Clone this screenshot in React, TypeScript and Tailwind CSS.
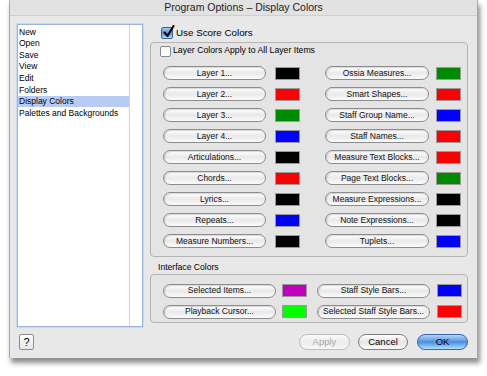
import React from "react";

type Item = { label: string; color: string };

const leftItems: Item[] = [
  { label: "Layer 1...", color: "#000000" },
  { label: "Layer 2...", color: "#ff0000" },
  { label: "Layer 3...", color: "#008a00" },
  { label: "Layer 4...", color: "#0000ff" },
  { label: "Articulations...", color: "#000000" },
  { label: "Chords...", color: "#ff0000" },
  { label: "Lyrics...", color: "#000000" },
  { label: "Repeats...", color: "#0000ff" },
  { label: "Measure Numbers...", color: "#000000" },
];

const rightItems: Item[] = [
  { label: "Ossia Measures...", color: "#008a00" },
  { label: "Smart Shapes...", color: "#ff0000" },
  { label: "Staff Group Name...", color: "#0000ff" },
  { label: "Staff Names...", color: "#ff0000" },
  { label: "Measure Text Blocks...", color: "#ff0000" },
  { label: "Page Text Blocks...", color: "#008a00" },
  { label: "Measure Expressions...", color: "#000000" },
  { label: "Note Expressions...", color: "#000000" },
  { label: "Tuplets...", color: "#0000ff" },
];

const categories = [
  "New",
  "Open",
  "Save",
  "View",
  "Edit",
  "Folders",
  "Display Colors",
  "Palettes and Backgrounds",
];

function PillButton({ label, width }: { label: string; width: string }) {
  return (
    <div
      className={`${width} h-[14px] rounded-full border border-[#8c8c8c] bg-gradient-to-b from-[#ffffff] via-[#e9e9e9] to-[#fbfbfb] flex items-center justify-center text-[8.5px] leading-none text-[#111] shadow-[inset_1px_1px_1px_rgba(0,0,0,0.15)]`}
    >
      {label}
    </div>
  );
}

function Swatch({ color }: { color: string }) {
  return (
    <div
      className="w-[25px] h-[13px] border border-[#9a9a9a]"
      style={{ backgroundColor: color }}
    />
  );
}

function AquaCheck({ checked }: { checked: boolean }) {
  if (!checked) {
    return (
      <div className="w-[11px] h-[11px] rounded-[2px] border border-[#8a8a8a] bg-gradient-to-b from-[#f4f4f4] to-[#ffffff]" />
    );
  }
  return (
    <div className="relative w-[12px] h-[12px] rounded-[2px] border border-[#3b5f9a] bg-gradient-to-b from-[#a9cbf2] via-[#4f8fdc] to-[#b4dcfb]">
      <svg
        className="absolute left-[1px] top-[-3px]"
        width="12"
        height="13"
        viewBox="0 0 12 13"
      >
        <path
          d="M1.5 7.5 L4.5 11 L10.5 1"
          fill="none"
          stroke="#000"
          strokeWidth="2"
          strokeLinecap="round"
          strokeLinejoin="round"
        />
      </svg>
    </div>
  );
}

export default function App() {
  return (
    <div
      className="w-[487px] h-[376px] bg-white overflow-hidden"
      style={{ fontFamily: '"Liberation Sans", Arial, sans-serif' }}
    >
      <div className="ml-[9px] w-[469px] h-[358px] bg-[#e8e8e8] border-x border-[#a8a8a8] shadow-[2px_5px_5px_rgba(0,0,0,0.45)] flex flex-col">
        {/* title bar */}
        <div className="h-[16px] border-b border-[#cfcfcf] bg-[#e2e2e2] flex items-center justify-center text-[10.5px] text-[#222]">
          Program Options – Display Colors
        </div>

        <div className="flex pt-[8px] pl-[7px]">
          {/* category list */}
          <div className="w-[126px] h-[303px] bg-white border border-[#98b6e2] shadow-[0_0_0_1px_#c7d9f3] flex">
            <div className="flex-1 pt-[1px] border-r border-[#d4d4d4]">
              {categories.map((c) => (
                <div
                  key={c}
                  className={`h-[11.6px] pl-[1px] flex items-center text-[8.5px] leading-none text-black ${
                    c === "Display Colors" ? "bg-[#b8cbf2]" : ""
                  }`}
                >
                  {c}
                </div>
              ))}
            </div>
            <div className="w-[12px]" />
          </div>

          {/* right pane */}
          <div className="ml-[7px] w-[318px] flex flex-col">
            <div className="flex items-center h-[14px] mt-[2px] pl-[11px] gap-[3px] text-[9.8px] text-black">
              <AquaCheck checked />
              <span>Use Score Colors</span>
            </div>

            <div className="mt-[2px] h-[215px] rounded-[4px] border border-[#b4b4b4] bg-[#e4e4e4] flex flex-col">
              <div className="flex items-center h-[12px] mt-[2px] pl-[9px] gap-[2px] text-[8.7px] text-black">
                <AquaCheck checked={false} />
                <span>Layer Colors Apply to All Layer Items</span>
              </div>

              <div className="mt-[9px] pl-[12px] flex gap-[25px]">
                <div className="flex flex-col gap-[7px]">
                  {leftItems.map((it) => (
                    <div key={it.label} className="flex items-center gap-[9px]">
                      <PillButton label={it.label} width="w-[103px]" />
                      <Swatch color={it.color} />
                    </div>
                  ))}
                </div>
                <div className="flex flex-col gap-[7px]">
                  {rightItems.map((it) => (
                    <div key={it.label} className="flex items-center gap-[7px]">
                      <PillButton label={it.label} width="w-[104px]" />
                      <Swatch color={it.color} />
                    </div>
                  ))}
                </div>
              </div>
            </div>

            <div className="mt-[6px] pl-[8px] text-[8.6px] leading-none text-black">
              Interface Colors
            </div>
            <div className="mt-[2px] h-[49px] rounded-[4px] border border-[#b4b4b4] bg-[#e4e4e4] pl-[12px] pt-[9px] flex flex-col gap-[7px]">
              <div className="flex items-center">
                <PillButton label="Selected Items..." width="w-[113px]" />
                <div className="ml-[6px]">
                  <Swatch color="#bf00bf" />
                </div>
                <div className="ml-[10px]">
                  <PillButton label="Staff Style Bars..." width="w-[113px]" />
                </div>
                <div className="ml-[7px]">
                  <Swatch color="#0000ff" />
                </div>
              </div>
              <div className="flex items-center">
                <PillButton label="Playback Cursor..." width="w-[113px]" />
                <div className="ml-[6px]">
                  <Swatch color="#00ff00" />
                </div>
                <div className="ml-[10px]">
                  <PillButton label="Selected Staff Style Bars..." width="w-[113px]" />
                </div>
                <div className="ml-[7px]">
                  <Swatch color="#ff0000" />
                </div>
              </div>
            </div>
          </div>
        </div>

        {/* bottom bar */}
        <div className="mt-[7px] flex items-center pl-[9px] pr-[9px]">
          <div className="w-[15px] h-[16px] rounded-[2px] border border-[#8c8c8c] bg-gradient-to-b from-[#ffffff] to-[#e6e6e6] flex items-center justify-center text-[11px] text-black">
            ?
          </div>
          <div className="flex-1" />
          <div className="w-[51px] h-[16px] rounded-full border border-[#bdbdbd] bg-gradient-to-b from-[#fbfbfb] via-[#ececec] to-[#f8f8f8] flex items-center justify-center text-[9.5px] text-[#a8a8a8]">
            Apply
          </div>
          <div className="ml-[8px] w-[50px] h-[16px] rounded-full border border-[#7e7e7e] bg-gradient-to-b from-[#ffffff] via-[#e6e6e6] to-[#fafafa] flex items-center justify-center text-[9.5px] text-black">
            Cancel
          </div>
          <div className="ml-[9px] w-[51px] h-[16px] rounded-full border border-[#3c63a8] bg-gradient-to-b from-[#b5d6f7] via-[#4b8ee0] to-[#aee0ff] flex items-center justify-center text-[9.5px] text-black">
            OK
          </div>
        </div>
      </div>
    </div>
  );
}
